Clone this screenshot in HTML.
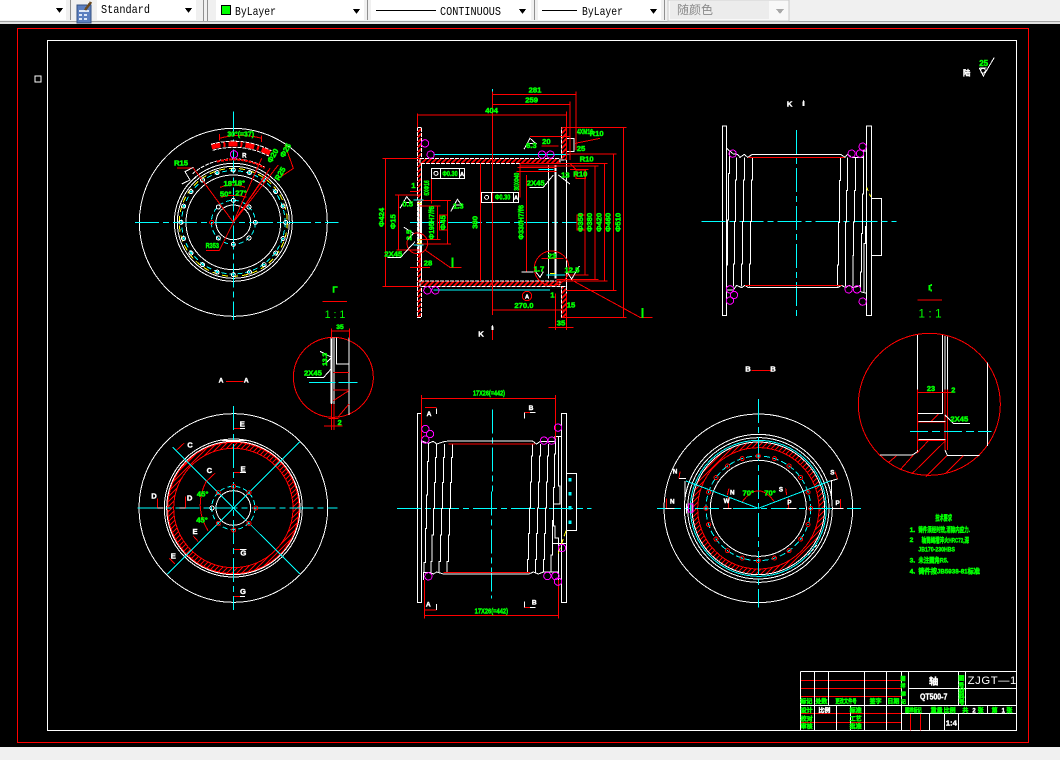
<!DOCTYPE html>
<html><head><meta charset="utf-8"><title>CAD</title>
<style>
html,body{margin:0;padding:0;background:#000;width:1060px;height:760px;overflow:hidden}
svg{display:block;shape-rendering:crispEdges}
svg *{vector-effect:non-scaling-stroke}
.w,.r,.c,.m,.y,.d{fill:none;stroke-width:1}
.w{stroke:#fff}.r{stroke:#f00}.c{stroke:#0ff}.m{stroke:#f0f}.y{stroke:#ff0}
.cl{stroke-dasharray:24 4 6 4}
.d{stroke:#fff;stroke-dasharray:4 1}
.b{stroke-width:2}
text{stroke:none;font-family:"Liberation Sans","Noto Sans CJK SC",sans-serif}
.g{fill:#0f0;stroke:#0f0;stroke-width:.5;font-size:23px;font-weight:bold;text-anchor:middle}
.l{fill:#fff;stroke:#fff;stroke-width:.4;font-size:23px;font-weight:bold;text-anchor:middle}
.s{fill:#0f0;stroke:#0f0;stroke-width:.5;font-size:18px;font-weight:bold;text-anchor:middle}
.n{fill:#0f0;stroke:#0f0;stroke-width:.5;font-size:20px;font-weight:bold}
.tb{font-family:"Liberation Mono","Noto Sans CJK SC",monospace;font-size:12px;fill:#000}
</style></head><body>
<svg width="1060" height="760" viewBox="0 0 1060 760" xmlns="http://www.w3.org/2000/svg">
<defs>
<pattern id="h" width="15" height="15" patternUnits="userSpaceOnUse"><rect width="15" height="15" fill="#000"/><path d="M-2 17L17 -2M-2 2L2 -2M13 17L17 13" stroke="#f00" stroke-width="5" fill="none" style="vector-effect:none"/></pattern>
<pattern id="h2" width="15" height="15" patternUnits="userSpaceOnUse"><rect width="15" height="15" fill="#000"/><path d="M-2 17L17 -2M-2 2L2 -2M13 17L17 13" stroke="#f00" stroke-width="3" fill="none" style="vector-effect:none"/></pattern>
<g id="b1"><circle cx="310" cy="180" r="6" class="w"/><circle cx="310" cy="180" r="3" fill="#0ff" stroke="none"/></g>
<g id="b7"><circle cx="310" cy="303" r="6" class="r"/><circle cx="310" cy="303" r="2" fill="#0ff" stroke="none"/></g>
</defs>
<rect width="1060" height="760" fill="#000"/>

<!-- toolbar -->
<rect x="0" y="0" width="1060" height="22" fill="#f0f0f0"/>
<rect x="0" y="21" width="1060" height="1" fill="#a0a0a0"/>
<rect x="0" y="22" width="1060" height="2" fill="#e0e0e0"/>
<rect x="0" y="0" width="66" height="20" fill="#fff"/>
<rect x="97" y="0" width="99" height="20" fill="#fff"/>
<rect x="216" y="0" width="148" height="20" fill="#fff"/>
<rect x="371" y="0" width="160" height="20" fill="#fff"/>
<rect x="538" y="0" width="123" height="20" fill="#fff"/>
<rect x="668" y="0" width="121" height="21" fill="#f8f8f8" stroke="#c8c8c8"/>
<rect x="670" y="1" width="99" height="18" fill="#ececec"/>
<path d="M70.500 0V20M203.500 0V21M207.500 0V21M367.500 0V20M534.500 0V20M664.500 0V20" stroke="#909090" fill="none"/>
<path d="M56 8h7l-3.500 5zM185 8h7l-3.500 5zM353 9h7l-3.500 5zM519 9h7l-3.500 5zM650 9h7l-3.500 5z" fill="#000"/>
<path d="M776 9h8l-4 5z" fill="#a8a8a8"/>
<rect x="77" y="5" width="14" height="18" fill="#5c7fc0" stroke="#34507f"/>
<path d="M79 10h10v2h-10zM79 14h3v2h-3zM84 14h3v2h-3zM79 18h3v2h-3zM84 18h3v2h-3z" fill="#dfe8f8"/>
<path d="M85 10L91 2" stroke="#6a4a20" stroke-width="2.500" fill="none"/>
<text class="tb" x="101" y="13" textLength="49" lengthAdjust="spacingAndGlyphs">Standard</text>
<rect x="221.500" y="5.500" width="9" height="9" fill="#0f0" stroke="#000"/>
<text class="tb" x="235" y="15" textLength="41" lengthAdjust="spacingAndGlyphs">ByLayer</text>
<rect x="376" y="10" width="60" height="1" fill="#000"/>
<text class="tb" x="440" y="15" textLength="61" lengthAdjust="spacingAndGlyphs">CONTINUOUS</text>
<rect x="542" y="10" width="35" height="1" fill="#000"/>
<text class="tb" x="582" y="15" textLength="41" lengthAdjust="spacingAndGlyphs">ByLayer</text>
<text x="677" y="14" font-size="12" fill="#8a8a8a" style="font-family:'Noto Sans CJK SC',sans-serif">随颜色</text>

<!-- frames -->
<rect x="17.500" y="28.500" width="1011" height="714" class="r"/>
<rect x="47.500" y="40.500" width="969" height="690" class="w"/>
<rect x="35" y="76" width="6" height="6" fill="#000" stroke="#fff"/>
<rect x="0" y="747" width="1060" height="13" fill="#f0f0f0"/>

<!-- roughness top right -->
<g transform="translate(940,40) scale(.33333)">
<path class="w" d="M118 84L130 108L163 52M118 84H140"/>
<circle class="w" cx="129" cy="92" r="7"/>
<text class="g" x="131" y="78" style="font-size:24px">25</text>
<text class="l" x="80" y="107" style="font-size:22px">陆</text>
</g>

<!-- top left circle -->
<g transform="translate(130,110) scale(.33333)">
<circle class="w" cx="310" cy="337" r="282"/>
<circle class="w" cx="310" cy="337" r="177"/>
<circle class="w" cx="310" cy="337" r="168"/>
<circle class="y" cx="310" cy="337" r="162" stroke-dasharray="6 4"/>
<circle class="c" cx="310" cy="337" r="155" stroke-dasharray="5 3"/>
<circle class="w" cx="310" cy="337" r="142"/>
<circle class="w" cx="310" cy="337" r="52"/>
<circle class="c" cx="310" cy="337" r="66" stroke-dasharray="5 3"/>
<path class="c cl" d="M15 337H625"/>
<path class="c cl" d="M310 5V630"/>
<use href="#b1"/><use href="#b1" transform="rotate(18 310 337)"/><use href="#b1" transform="rotate(36 310 337)"/><use href="#b1" transform="rotate(54 310 337)"/><use href="#b1" transform="rotate(72 310 337)"/><use href="#b1" transform="rotate(90 310 337)"/><use href="#b1" transform="rotate(108 310 337)"/><use href="#b1" transform="rotate(126 310 337)"/><use href="#b1" transform="rotate(144 310 337)"/><use href="#b1" transform="rotate(162 310 337)"/><use href="#b1" transform="rotate(180 310 337)"/><use href="#b1" transform="rotate(198 310 337)"/><use href="#b1" transform="rotate(216 310 337)"/><use href="#b1" transform="rotate(234 310 337)"/><use href="#b1" transform="rotate(252 310 337)"/><use href="#b1" transform="rotate(270 310 337)"/><use href="#b1" transform="rotate(288 310 337)"/><use href="#b1" transform="rotate(306 310 337)"/><use href="#b1" transform="rotate(324 310 337)"/><use href="#b1" transform="rotate(342 310 337)"/>
<circle class="w" cx="310" cy="271" r="6"/><circle class="w" cx="357" cy="291" r="6"/><circle class="w" cx="376" cy="337" r="6"/><circle class="w" cx="357" cy="384" r="6"/><circle class="w" cx="310" cy="403" r="6"/><circle class="w" cx="265" cy="384" r="6"/><circle class="r" cx="245" cy="337" r="6"/><circle class="w" cx="265" cy="291" r="6"/>
<rect x="0" y="0" width="0" height="0"/>
<path d="M245 111A235 235 0 0 1 420 130" fill="none" stroke="#f00" stroke-width="5" stroke-dasharray="9 3 2 3"/>
<path class="d" d="M243 103A243 243 0 0 1 424 122M248 121A225 225 0 0 1 416 138"/>
<path class="d" d="M188 191A190 190 0 0 1 405 172M170 228A177 177 0 0 1 200 200"/>
<path d="M261 155A188 188 0 0 1 404 174" fill="none" stroke="#f00" stroke-width="2" stroke-dasharray="3 1"/>
<path class="r" d="M268 85A240 240 0 0 1 395 85M268 72V92M395 76V96M141 174H190L310 337M310 337L405 200M310 337L420 175M310 337L445 165M310 337L395 145M228 421H268L310 337M270 232Q310 218 345 232M272 262Q310 250 350 262M445 205L490 175L465 105"/>
<circle class="m" cx="312" cy="133" r="11"/>
<path class="w" d="M155 222L180 210L165 185L190 172"/>
<text class="l" x="343" y="142" style="font-size:18px">R</text>
<text class="g" x="332" y="80" textLength="80" lengthAdjust="spacingAndGlyphs">30°(=37)</text>
<text class="g" x="153" y="167">R15</text><text class="g" x="247" y="414" textLength="40" lengthAdjust="spacingAndGlyphs">R353</text>
<text class="g" x="298" y="228">18°</text><text class="g" x="328" y="226">18°</text><text class="g" x="287" y="260">50°</text><text class="g" x="333" y="256">27°</text>
<text class="g" transform="rotate(-60 430 138)" x="430" y="144">Φ20</text>
<text class="g" transform="rotate(-60 468 122)" x="468" y="128">Φ25</text>
<text class="g" transform="rotate(-60 452 192)" x="452" y="198">R25</text>
</g>

<!-- I detail label -->
<g transform="translate(285,280) scale(.33333)">
<circle class="r" cx="145" cy="292" r="120"/>
<path class="w b" d="M140 172V370"/>
<path class="w" d="M147 172V370M154 172V252H192M192 172V405M145 278H192M145 330H192M140 370V450M147 370V450"/>
<path class="r" d="M112 64H186M139 145V175M193 145V175M139 153H193M145 278H192M145 330H192M145 362L190 333M160 410L192 372M140 372V450M147 372V450M117 438H172M130 415H160"/>
<path class="c" d="M72 307H152M160 307H218"/>
<path class="w" d="M105 214L140 232L122 250M66 292H116L140 265"/>
<text class="g" x="150" y="38" style="font-size:26px">Γ</text>
<text class="g" x="150" y="114" style="font-size:32px;font-weight:normal;stroke-width:0">1 : 1</text>
<text class="s" x="165" y="147" style="font-size:20px">35</text>
<text class="s" x="120" y="244" transform="rotate(-90 120 238)" style="font-size:20px">13.3</text>
<text class="g" x="84" y="286">2X45</text>
<text class="s" x="164" y="435" style="font-size:22px">2</text>
</g>

<!-- main section -->
<g transform="translate(370,80) scale(.33333)">
<rect x="142" y="142" width="13" height="570" class="d" style="fill:url(#h)"/>
<rect x="574" y="142" width="16" height="98" class="d" style="fill:url(#h)"/>
<rect x="574" y="620" width="16" height="92" class="d" style="fill:url(#h)"/>
<rect x="150" y="235" width="420" height="15" class="d" style="fill:url(#h)"/>
<rect x="150" y="603" width="420" height="17" class="d" style="fill:url(#h)"/>
<path class="c" d="M190 223H600M190 630H540"/>
<path class="c cl" d="M367 27V705M120 427H620"/>
<path class="w b" d="M146 365V520M557 255V595"/>
<path class="w" d="M155 250V603M535 255V595M590 240V620M152 365V520"/>
<path class="w" d="M590 175H612V215H590M600 165V220"/>
<path class="r" d="M367 43H618M367 73H600M143 105H590M618 35V210M600 65V240M590 95V240M143 100V142M367 35V705M760 142V712M730 222V632M703 250V603M675 258V598M645 268V585M575 142H770M575 712H770M590 222H740M590 632H740M450 250H713M560 603H713M450 258H685M560 598H685M600 268H655M560 585H655M47 235V620M37 235H150M37 620H150M85 345V510M75 345H150M80 510H150M233 362V492M140 362H243M140 492H243M202 378V478M150 378H212M150 478H212M331 250V603M185 290V370M450 250V352M470 285V575M440 275H560M615 190L690 175M600 250L618 268M165 510L240 562H275M605 600L810 712H848M367 690H590M556 640V750M590 640V750M535 742H610M120 562H180M150 520V565M120 335H150M480 170H600M515 198H565M515 535H580M442 263H560"/>
<rect class="r" x="208" y="405" width="24" height="45"/>
<rect class="r" x="621" y="405" width="24" height="45"/>
<rect class="r" x="618" y="270" width="28" height="25"/>
<circle class="r" cx="142" cy="490" r="31"/>
<circle class="r" cx="545" cy="565" r="52"/>
<circle class="r" cx="471" cy="648" r="14"/>
<path class="w" d="M184 265H284V296H184ZM212 265V296M268 265V296M334 337H446V368H334ZM365 337V368M430 337V368"/>
<circle class="w" cx="198" cy="280" r="6"/><circle class="w" cx="350" cy="352" r="6"/>
<circle class="m" cx="165" cy="190" r="11"/><circle class="m" cx="182" cy="224" r="11"/><circle class="m" cx="516" cy="224" r="11"/><circle class="m" cx="541" cy="224" r="11"/><circle class="m" cx="172" cy="631" r="11"/><circle class="m" cx="196" cy="631" r="11"/>
<path class="w" d="M462 208L480 175L497 190H470M90 385L110 350L125 368H100M242 395L262 358L275 375H250M102 442L130 460L115 478M52 532H92L135 485M478 322H520L550 285M565 285L600 312M455 576H490M497 575L510 592L520 575M590 575L605 597L628 558"/>
<path class="y" d="M143 370H155M143 480H155M143 490H155M540 580H555"/>
<path class="c" d="M130 360H160M130 495H160M505 268H550M530 585H585"/>
<text class="g" x="495" y="37">281</text><text class="g" x="485" y="67">259</text><text class="g" x="365" y="99">404</text>
<text class="g" x="645" y="162" textLength="48" lengthAdjust="spacingAndGlyphs">4XM16</text><text class="g" x="680" y="168">R10</text>
<text class="g" x="633" y="213">25</text><text class="g" x="650" y="244">R10</text><text class="g" x="631" y="290">R10</text>
<text class="g" x="529" y="192">20</text><text class="g" x="484" y="204">6.3</text><text class="g" x="113" y="380">0.5</text>
<text class="g" x="265" y="386">1.3</text><text class="g" x="70" y="530">2X45</text><text class="g" x="497" y="316">2X45</text>
<text class="g" x="586" y="292">13</text><text class="g" x="174" y="557">28</text><text class="g" x="507" y="574">1.7</text><text class="g" x="606" y="578">12.5</text>
<text class="g" x="546" y="536">23</text><text class="g" x="462" y="684">270.0</text><text class="g" x="603" y="683">15</text><text class="g" x="573" y="736">35</text><text class="g" x="547" y="652">1</text><text class="g" x="130" y="324">1</text>
<text class="g" x="240" y="288" textLength="46" lengthAdjust="spacingAndGlyphs">Φ0.30</text><text class="g" x="398" y="359" textLength="46" lengthAdjust="spacingAndGlyphs">Φ0.30</text>
<text class="l" x="276" y="288" style="font-size:17px">A</text><text class="l" x="438" y="359" style="font-size:17px">A</text><text class="l" x="471" y="655" style="font-size:17px">A</text>
<text class="g" transform="rotate(-90 36 412)" x="36" y="418">Φ424</text>
<text class="g" transform="rotate(-90 71 425)" x="71" y="431">Φ15</text>
<text class="g" transform="rotate(-90 171 324)" x="171" y="330" textLength="46" lengthAdjust="spacingAndGlyphs">6XΦ16</text>
<text class="g" transform="rotate(-90 186 428)" x="186" y="434" textLength="100" lengthAdjust="spacingAndGlyphs">Φ195H7/f6</text>
<text class="g" transform="rotate(-90 220 428)" x="220" y="434">Φ45</text>
<text class="g" transform="rotate(-90 316 427)" x="316" y="433">380</text>
<text class="g" transform="rotate(-90 441 305)" x="441" y="311" textLength="54" lengthAdjust="spacingAndGlyphs">30XΦ40</text>
<text class="g" transform="rotate(-90 454 427)" x="454" y="433" textLength="104" lengthAdjust="spacingAndGlyphs">Φ330H7/f6</text>
<text class="g" transform="rotate(-90 633 427)" x="633" y="433">Φ350</text>
<text class="g" transform="rotate(-90 660 427)" x="660" y="433">Φ380</text>
<text class="g" transform="rotate(-90 689 427)" x="689" y="433">Φ420</text>
<text class="g" transform="rotate(-90 716 427)" x="716" y="433">Φ460</text>
<text class="g" transform="rotate(-90 746 427)" x="746" y="433">Φ510</text>
<text class="g" transform="rotate(-90 118 465)" x="118" y="471">2.5</text>
<path d="M247 532v30M818 684v30" stroke="#0f0" stroke-width="2" fill="none"/>
<text class="l" x="333" y="770">K</text>
<path d="M364 750h6v-10l-3 -6l-3 6z" fill="#fff"/>
<path class="r" d="M367 750V780"/>
</g>

<!-- K view -->
<g transform="translate(695,90) scale(.33333)">
<rect class="w" x="82" y="108" width="13" height="569"/>
<rect class="w" x="514" y="108" width="16" height="569"/>
<path class="w" d="M530 325H560V497H530"/>
<path class="c cl" d="M304 120V690M20 394H605"/>
<path class="w" d="M95 175L103 182L115 192L127 193L135 202L148 193L158 202L172 193H437L450 202L458 193L470 202H505V183H514M95 600H115L125 586L140 593L150 586L160 593H428L440 586L452 593L462 586L475 593L497 586V605L514 610"/>
<path class="w" d="M103 182V250H100V390H97V525H95V600M124 202V270H121V395H118V522H115V590M148 202V270H145V395H142V522H139V590M172 202V270H169V395H166V522H163V590M436 202V272H433V398H430V525H427V590M458 202V302H454V396H452V496H451V590M481 202V302H478V396H476V496H474V590M505 182V312H502V430H499V546H497V600M511 408V460H507V606"/>
<path class="r" d="M160 202H448M150 586H440"/>
<path class="y" d="M515 292L527 320" stroke-dasharray="4 3"/>
<circle class="m" cx="113" cy="191" r="11"/><circle class="m" cx="470" cy="191" r="11"/><circle class="m" cx="495" cy="191" r="11"/><circle class="m" cx="503" cy="170" r="11"/><circle class="m" cx="105" cy="598" r="11"/><circle class="m" cx="117" cy="615" r="11"/><circle class="m" cx="105" cy="632" r="11"/><circle class="m" cx="461" cy="598" r="11"/><circle class="m" cx="486" cy="598" r="11"/><circle class="m" cx="503" cy="635" r="11"/>
<text class="l" x="284" y="49">K</text>
<path d="M322 48h7v-12l-3 -6l-4 6z" fill="#fff"/>
</g>

<!-- A-A -->
<g transform="translate(130,370) scale(.33333)">
<circle class="w" cx="310" cy="414" r="283"/>
<circle class="w" cx="310" cy="414" r="207"/>
<circle class="w" cx="310" cy="414" r="200"/>
<path fill="url(#h2)" fill-rule="evenodd" d="M113 414a197 197 0 1 0 394 0a197 197 0 1 0 -394 0ZM131 414a179 179 0 1 0 358 0a179 179 0 1 0 -358 0Z"/>
<circle class="r" cx="310" cy="414" r="197"/>
<circle class="r" cx="310" cy="414" r="179"/>
<circle class="w" cx="310" cy="414" r="52"/>
<circle class="c" cx="310" cy="414" r="65" stroke-dasharray="5 3"/>
<path class="c cl" d="M22 414H622M310 108V720"/>
<path class="c" d="M128 232L510 612M510 215L112 612"/>
<circle class="r" cx="311" cy="349" r="6"/><circle class="r" cx="357" cy="368" r="6"/><circle class="r" cx="377" cy="414" r="6"/><circle class="r" cx="357" cy="460" r="6"/><circle class="r" cx="311" cy="480" r="6"/><circle class="r" cx="265" cy="460" r="6"/><circle class="w" cx="246" cy="414" r="6"/><circle class="r" cx="265" cy="368" r="6"/>
<path class="r" d="M288 34H340M312 176H330M312 308H330M312 538H330M312 680H330M82 414V385M166 414V380M229 333Q190 410 234 482M140 240L162 220M230 333L255 310M205 515L190 498M135 582L118 565"/>
<path class="w" d="M330 176H345M330 308H348M330 538H350M330 680H345M82 414H100M148 414H166M275 212H350"/>
<text class="l" x="273" y="38" style="font-size:20px">A</text><text class="l" x="349" y="38" style="font-size:20px">A</text>
<text class="l" x="337" y="170">E</text><text class="l" x="339" y="304">E</text><text class="l" x="340" y="557">G</text><text class="l" x="339" y="672">G</text>
<text class="l" x="180" y="232">C</text><text class="l" x="238" y="309">C</text><text class="l" x="72" y="385">D</text><text class="l" x="179" y="391">D</text><text class="l" x="195" y="492">E</text><text class="l" x="130" y="565">E</text>
<text class="g" x="218" y="380">45°</text><text class="g" x="216" y="458">45°</text>
</g>

<!-- B-B center lower -->
<g transform="translate(395,380) scale(.33333)">
<rect class="w" x="67" y="100" width="13" height="567"/>
<rect class="w" x="499" y="100" width="16" height="567"/>
<path class="w" d="M515 280H545V452H515"/>
<path class="c cl" d="M292 88V335M289 335V655M6 385H590"/>
<path class="w" d="M80 183L100 190L115 184L125 192L150 184L172 183H412L425 192L436 184H480V170H499M85 600V578H105L115 582L125 576L145 582L157 582H402L415 576L430 582L445 576H490V600"/>
<path class="w" d="M100 190V245H97V345H94V445H91V548H87V578M124 192V232H121V308H118V386H115V465H111V545H108V578M148 192V232H145V308H142V386H139V465H136V545H132V578M172 192V232H169V308H166V386H163V465H160V545H156V578M412 192V228H409V306H406V384H403V460H400V538H397V578M436 192V228H433V306H430V384H427V460H424V538H421V578M460 192V228H457V306H454V384H451V460H448V538H445V578M482 170V222H478V322H475V422H472V525H468V578M490 170V318H495V372H476V438H480V474H490V578M473 490H515"/>
<path class="r" d="M160 192H420M145 577H405"/>
<path class="r" d="M80 55H480M79 45V178M481 45V175M88 706H490M88 600V715M490 600V715M90 82H125M90 690H125M388 97H420M388 682H420"/>
<path class="y" d="M513 452L490 520" stroke-dasharray="6 3"/>
<circle class="m" cx="91" cy="147" r="11"/><circle class="m" cx="105" cy="162" r="11"/><circle class="m" cx="91" cy="179" r="11"/><circle class="m" cx="489" cy="143" r="11"/><circle class="m" cx="447" cy="182" r="11"/><circle class="m" cx="470" cy="182" r="11"/><circle class="m" cx="100" cy="589" r="11"/><circle class="m" cx="457" cy="588" r="11"/><circle class="m" cx="481" cy="588" r="11"/><circle class="m" cx="489" cy="605" r="11"/><circle class="m" cx="501" cy="504" r="11"/>
<path class="w" d="M125 85V102M388 97V116M405 97H422M125 672V690M388 664V682M405 682H422"/>
<g fill="#0ff" stroke="none"><rect x="520" y="294" width="10" height="10"/><rect x="520" y="336" width="10" height="10"/><rect x="520" y="378" width="10" height="10"/><rect x="520" y="422" width="10" height="10"/></g>
<text class="g" x="282" y="47" textLength="96" lengthAdjust="spacingAndGlyphs">17X26(=442)</text>
<text class="g" x="289" y="700" textLength="100" lengthAdjust="spacingAndGlyphs">17X26(=442)</text>
<text class="l" x="102" y="108" style="font-size:20px">A</text><text class="l" x="100" y="680" style="font-size:20px">A</text>
<text class="l" x="408" y="90" style="font-size:20px">B</text><text class="l" x="418" y="673" style="font-size:20px">B</text>
</g>

<!-- right lower circle -->
<g transform="translate(655,355) scale(.33333)">
<circle class="w" cx="310" cy="460" r="283"/>
<circle class="w" cx="310" cy="460" r="222"/>
<circle class="w" cx="310" cy="460" r="212"/>
<circle class="c" cx="310" cy="460" r="204"/>
<path fill="url(#h2)" fill-rule="evenodd" d="M111 460a199 199 0 1 0 398 0a199 199 0 1 0 -398 0ZM128 460a182 182 0 1 0 364 0a182 182 0 1 0 -364 0Z"/>
<circle class="w" cx="310" cy="460" r="199"/>
<circle class="r" cx="310" cy="460" r="182"/>
<circle class="c" cx="310" cy="460" r="157" stroke-dasharray="6 3"/>
<circle class="w" cx="310" cy="460" r="144"/>
<path class="c cl" d="M6 460H618M310 132V758"/>
<path class="c" d="M310 460L93 378M310 460L525 378"/>
<use href="#b7"/><use href="#b7" transform="rotate(18 310 460)"/><use href="#b7" transform="rotate(36 310 460)"/><use href="#b7" transform="rotate(54 310 460)"/><use href="#b7" transform="rotate(72 310 460)"/><use href="#b7" transform="rotate(90 310 460)"/><use href="#b7" transform="rotate(108 310 460)"/><use href="#b7" transform="rotate(126 310 460)"/><use href="#b7" transform="rotate(144 310 460)"/><use href="#b7" transform="rotate(162 310 460)"/><use href="#b7" transform="rotate(180 310 460)"/><use href="#b7" transform="rotate(198 310 460)"/><use href="#b7" transform="rotate(216 310 460)"/><use href="#b7" transform="rotate(234 310 460)"/><use href="#b7" transform="rotate(252 310 460)"/><use href="#b7" transform="rotate(270 310 460)"/><use href="#b7" transform="rotate(288 310 460)"/><use href="#b7" transform="rotate(306 310 460)"/><use href="#b7" transform="rotate(324 310 460)"/><use href="#b7" transform="rotate(342 310 460)"/>
<path class="r" d="M290 46H346M262 440Q310 375 358 440M35 460V430M220 460V425M400 460V430M556 460V432M72 370L75 350M548 372L540 350M217 420L222 400M395 420L392 400"/>
<path class="w" d="M32 460H58M205 460H230M395 460H425M530 460H565M72 370H93M525 378L548 372M90 378V430M530 378V430M95 445V475"/>
<rect class="m" x="100" y="447" width="14" height="24"/>
<path class="w" d="M460 600L490 565" stroke-dasharray="3 2"/>
<text class="l" x="279" y="49">B</text><text class="l" x="354" y="49">B</text>
<text class="l" x="52" y="445" style="font-size:19px">N</text><text class="l" x="232" y="418" style="font-size:19px">N</text><text class="l" x="60" y="355" style="font-size:19px">N</text><text class="l" x="215" y="444" style="font-size:19px">W</text>
<text class="l" x="378" y="410" style="font-size:19px">S</text><text class="l" x="532" y="358" style="font-size:19px">S</text><text class="l" x="403" y="448" style="font-size:19px">P</text><text class="l" x="548" y="450" style="font-size:19px">P</text>
<text class="g" x="280" y="421">70°</text><text class="g" x="345" y="421">70°</text>
</g>

<!-- II detail -->
<g transform="translate(850,280) scale(.33333)">
<circle class="r" cx="238" cy="373" r="213"/>
<path class="w" d="M202 165V515L187 525H90M277 165V400H202M285 168V510L292 526H388M293 170V410H285M412 247V498"/>
<path class="r" d="M202 60H276M202 328V510M202 337H305M285 328V510M293 328V510M203 426H287M203 482H287M115 548L140 527M150 570L190 525M185 582L287 482M228 590L290 527M285 582L340 527M240 427L265 402M200 520L235 482"/>
<path class="w" d="M205 425H287M205 479H287M285 405L310 430H360"/>
<path class="c" d="M180 454H424" style="stroke-dasharray:18 4 8 4"/>
<path d="M238 15v16M241 15h5M241 31h5" stroke="#0f0" stroke-width="2" fill="none"/>
<text class="g" x="240" y="112" style="font-size:36px;font-weight:normal;stroke-width:0">1 : 1</text>
<text class="s" x="243" y="333" style="font-size:22px">23</text><text class="s" x="310" y="338" style="font-size:22px">2</text><text class="g" x="328" y="425">2X45</text>
</g>

<!-- tech notes -->
<g transform="translate(895,505) scale(.33333)">
<text class="n" x="121" y="46" textLength="50" lengthAdjust="spacingAndGlyphs" style="font-size:23px">技术要求</text>
<text class="n" x="44" y="81">1.</text><text class="n" x="70" y="81" textLength="155" lengthAdjust="spacingAndGlyphs">铸件须经时效,消除内应力.</text>
<text class="n" x="44" y="111">2</text><text class="n" x="80" y="112" textLength="142" lengthAdjust="spacingAndGlyphs">轴筒绳槽淬火HRC72,深</text>
<text class="n" x="70" y="140" textLength="110" lengthAdjust="spacingAndGlyphs">JB170-230HBS</text>
<text class="n" x="44" y="172">3.</text><text class="n" x="70" y="172" textLength="90" lengthAdjust="spacingAndGlyphs">未注圆角R5.</text>
<text class="n" x="44" y="205">4.</text><text class="n" x="70" y="205" textLength="185" lengthAdjust="spacingAndGlyphs">铸件按JB5938-81标准</text>
</g>

<!-- title block -->
<g transform="translate(790,660) scale(.33333)">
<path class="r" d="M33 61H334M33 85H334M33 109H334M33 160H334M33 187H334M361 160V211M391 160V211"/>
<path class="w" d="M31 34H680M31 34V211M31 136H680M355 85H680M334 160H680M73 34V211M115 34V136M223 34V211M289 34V211M334 34V211M355 34V136M505 34V136M527 34V136M139 136V211M182 136V211M418 160V211M463 160V211M505 160V211M592 136V160"/>
<text class="l" x="431" y="73" style="font-size:28px">轴</text>
<text class="l" x="431" y="118" style="font-size:25px" textLength="82" lengthAdjust="spacingAndGlyphs">QT500-7</text>
<text x="533" y="72" fill="#fff" font-size="34" textLength="146" lengthAdjust="spacing">ZJGT—1</text>
<text class="l" x="484" y="196" style="font-size:23px">1:4</text>
<text class="l" x="103" y="157" style="font-size:18px">比例</text>
<text class="s" x="49" y="130">标记</text><text class="s" x="94" y="130">处数</text><text class="s" x="168" y="130" textLength="64" lengthAdjust="spacingAndGlyphs">更改文件号</text><text class="s" x="257" y="130">签字</text><text class="s" x="310" y="130">日期</text>
<text class="s" x="50" y="157">设计</text><text class="s" x="50" y="183">校对</text><text class="s" x="50" y="205">审核</text>
<text class="s" x="197" y="157">标准</text><text class="s" x="197" y="183">工艺</text><text class="s" x="197" y="205">批准</text>
<text class="s" x="339" y="61" style="font-size:15px">图</text><text class="s" x="339" y="82" style="font-size:15px">样</text><text class="s" x="340" y="106" style="font-size:15px">标</text><text class="s" x="340" y="130" style="font-size:15px">记</text>
<text class="s" x="514" y="61">图</text><text class="s" x="514" y="82">号</text><text class="s" x="515" y="101">材</text><text class="s" x="515" y="117">料</text><text class="s" x="515" y="133">号</text>
<text class="s" x="370" y="157" textLength="50" lengthAdjust="spacingAndGlyphs">图样标记</text><text class="s" x="440" y="157">重量</text><text class="s" x="479" y="157">比例</text>
<text class="s" x="526" y="157">共</text><text class="s" x="572" y="157">张</text><text class="s" x="614" y="157">第</text><text class="s" x="658" y="157">张</text>
<text class="l" x="552" y="157" style="font-size:18px">2</text><text class="l" x="640" y="157" style="font-size:18px">1</text>
</g>
</svg>
</body></html>
